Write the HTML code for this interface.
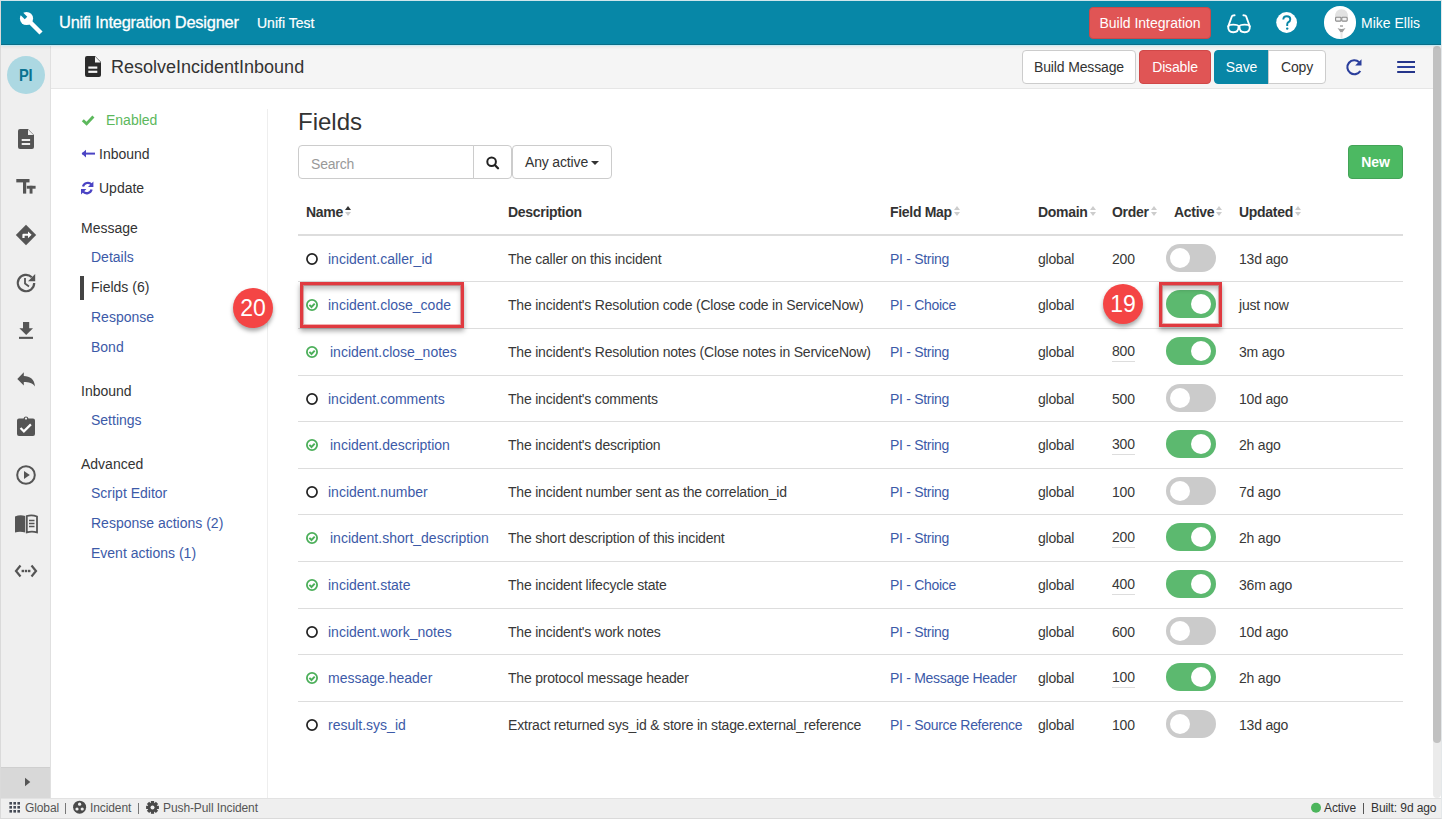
<!DOCTYPE html>
<html><head><meta charset="utf-8">
<style>
*{box-sizing:border-box;margin:0;padding:0}
html,body{width:1442px;height:819px;overflow:hidden;background:#fff;font-family:"Liberation Sans",sans-serif;color:#333}
.abs{position:absolute}
#frame{position:absolute;left:0;top:0;width:1442px;height:819px;border:1px solid #dadada;border-top-color:#cfe6ec;border-right-color:#e4e8ea;z-index:5}
#topbar{position:absolute;left:1px;top:1px;width:1440px;height:44px;background:#0787a7;border-bottom:1px solid #0a6d87;box-shadow:0 1px 0 #c9ecf5,0 2px 3px rgba(0,0,0,0.07);z-index:3}
.wt{color:#fff;white-space:nowrap}
#side{position:absolute;left:1px;top:45px;width:50px;height:753px;background:#efefef;border-right:1px solid #e0e0e0}
#pagehdr{position:absolute;left:51px;top:45px;width:1382px;height:44px;background:#f5f5f5;border-bottom:1px solid #e6e6e6}
#footer{position:absolute;left:1px;top:798px;width:1440px;height:20px;background:#efefef;border-top:1px solid #e2e2e2;font-size:12px;color:#444}
.btn{position:absolute;border:1px solid #ccc;border-radius:4px;background:#fff;font-size:14px;text-align:center;white-space:nowrap;letter-spacing:-0.15px}
.nav{position:absolute;font-size:14px;white-space:nowrap}
.lnk{color:#3c5aa8 !important}
.row{position:absolute;left:298px;width:1105px;border-bottom:1px solid #ddd}
.cell{position:absolute;font-size:14px;white-space:nowrap;top:50%;margin-top:-9px;line-height:18px;letter-spacing:-0.2px;color:#383838}
.icn{position:absolute;left:7px;top:50%;margin-top:-7px;width:14px;height:14px}
.icn svg{display:block}
.tog{position:absolute;width:50px;height:28px;border-radius:14px;background:#cbcbcb;top:8px;left:868px}
.tog::after{content:"";position:absolute;left:4px;top:4px;width:20px;height:20px;border-radius:50%;background:#fff}
.tog.on{background:#5cb96f}
.tog.on::after{left:25px}
.und{border-bottom:1px solid #ddd;line-height:17px;padding-bottom:1px}
.badge{position:absolute;width:40px;height:40px;border-radius:50%;background:#f44545;color:#fff;font-size:23px;text-align:center;line-height:40px;box-shadow:0 3px 4px rgba(0,0,0,0.35)}
.ft{position:absolute;top:2px;font-size:12px;line-height:14px;white-space:nowrap;letter-spacing:-0.1px}
.th{position:absolute;top:204px;font-size:14px;font-weight:bold;white-space:nowrap;color:#333;letter-spacing:-0.3px}
.sort{display:inline-block;width:7px;height:12px;margin-left:2px;vertical-align:-1px;position:relative}
.sort::before{content:"";position:absolute;left:0;top:0;border-left:3.5px solid transparent;border-right:3.5px solid transparent;border-bottom:4px solid #ccc}
.sort::after{content:"";position:absolute;left:0;top:6px;border-left:3.5px solid transparent;border-right:3.5px solid transparent;border-top:4px solid #ccc}
.sort.up::before{border-bottom-color:#333}
</style></head><body>
<div id="frame"></div>
<div id="topbar">
  <svg class="abs" style="left:13px;top:5px" width="34" height="34" viewBox="0 0 34 34">
    <circle cx="12.5" cy="12.5" r="6.6" fill="#fff"/><line x1="12.5" y1="12.5" x2="27" y2="27" stroke="#fff" stroke-width="4.4"/>
    <line x1="3" y1="3" x2="12" y2="12" stroke="#0787a7" stroke-width="3.6"/>
  </svg>
  <div class="abs wt" style="left:58px;top:12px;font-size:16.4px;letter-spacing:-0.2px;-webkit-text-stroke:0.3px #fff">Unifi Integration Designer</div>
  <div class="abs wt" style="left:256px;top:14px;font-size:14px;-webkit-text-stroke:0.2px #fff">Unifi Test</div>
  <div class="abs wt" style="left:1088px;top:6px;width:122px;height:32px;background:#e05555;border:1px solid #c9494a;border-radius:4px;font-size:14px;text-align:center;line-height:30px">Build Integration</div>
  <svg class="abs" style="left:1219px;top:7px" width="38" height="30" viewBox="0 0 38 30" fill="none" stroke="#fff" stroke-width="1.9" stroke-linecap="round" stroke-linejoin="round">
    <path d="M8.3,18.3 L11.9,8.2 Q12.4,7.2 14.6,7.2 M29.7,18.3 L26.1,8.2 Q25.6,7.2 23.4,7.2"/>
    <path d="M8.2,18.6 Q8.6,16.6 13.2,16.6 Q18.4,16.6 18.6,18.4 Q18.6,24.2 13.3,24.2 Q8,24.2 8.2,18.6 Z"/>
    <path d="M19.4,18.4 Q19.6,16.6 24.8,16.6 Q29.4,16.6 29.8,18.6 Q30,24.2 24.7,24.2 Q19.4,24.2 19.4,18.4 Z"/>
  </svg>
  <svg class="abs" style="left:1274.4px;top:10.4px" width="23" height="23" viewBox="0 0 23 23"><circle cx="11.6" cy="11.5" r="10.4" fill="#fff"/><path d="M8.3,8.6 Q8.3,5.2 11.8,5.2 Q15.3,5.2 15.3,8.3 Q15.3,10.3 13.1,11.4 Q12.2,12 12.2,13.6 V15" fill="none" stroke="#0886a6" stroke-width="1.9"/><circle cx="12.2" cy="17.6" r="1.2" fill="#0886a6"/></svg>
  <div class="abs" style="left:1322.5px;top:5px;width:32.5px;height:32.5px;border-radius:50%;background:#fff;overflow:hidden">
    <svg width="33" height="33" viewBox="1322 5 33 33"><path d="M1333,16 Q1333,8.5 1339.5,8.3 Q1346,8.5 1346,16 Z" fill="#e2e2e2"/><rect x="1333.6" y="16.3" width="5.4" height="3.8" rx="0.8" fill="#f2f2f2" stroke="#8a8a8a" stroke-width="1.1"/><rect x="1339.8" y="16.3" width="5.4" height="3.8" rx="0.8" fill="#f2f2f2" stroke="#8a8a8a" stroke-width="1.1"/><path d="M1338,24 h3 v2 h-3 Z" fill="#bbb"/><path d="M1335.5,27 Q1339.5,29 1343.5,27 L1340.3,31.5 h-1.6 Z" fill="#9c9c9c"/><rect x="1338.5" y="31" width="2" height="6" fill="#e6e6e6"/></svg>
  </div>
  <div class="abs wt" style="left:1360px;top:14px;font-size:14px">Mike Ellis</div>
</div>
<div id="side">
  <div class="abs" style="left:6px;top:10.6px;width:38px;height:38px;border-radius:50%;background:#acd8e2;color:#0b7391;font-size:17px;font-weight:bold;text-align:center;line-height:39px"><span style="display:inline-block;transform:scaleX(0.86);letter-spacing:-0.5px">PI</span></div>
  <svg class="abs" style="left:0;top:0" width="50" height="753" viewBox="1 45 50 753" fill="#555">
    <!-- doc -->
    <path d="M18,131 a2,2 0 0 1 2,-2 h8 l6,6 v12 a2,2 0 0 1 -2,2 h-12 a2,2 0 0 1 -2,-2 Z"/>
    <path d="M28,129.5 v5.5 h5.5 Z" fill="#efefef"/>
    <rect x="21.7" y="139" width="8.4" height="2" fill="#efefef"/><rect x="21.7" y="143" width="8.4" height="2" fill="#efefef"/>
    <!-- Tt -->
    <rect x="16.3" y="179" width="13.2" height="3.4"/><rect x="23" y="179" width="3.2" height="14.6"/>
    <rect x="26.8" y="185.8" width="8.8" height="2.9"/><rect x="29.6" y="185.8" width="2.9" height="7.8"/>
    <!-- diamond -->
    <path d="M26,224.8 L36.2,235 L26,245.2 L15.8,235 Z"/>
    <path d="M22.4,238 v-3.2 a1,1 0 0 1 1,-1 h4.6 v-2.4 l3.6,3.4 l-3.6,3.4 v-2.4 h-3.4 v2.2 Z" fill="#fff"/>
    <!-- history -->
    <path d="M34.2,283 A8.2,8.2 0 1 1 31.8,277.2" fill="none" stroke="#555" stroke-width="2.2"/>
    <path d="M35.2,274 v7.2 h-7.2 Z"/>
    <path d="M25,278 v5.6 l4,2.8" fill="none" stroke="#555" stroke-width="1.8"/>
    <!-- download -->
    <rect x="23" y="322" width="6.2" height="7"/><path d="M19.4,328.2 h13.6 l-6.8,6.8 Z"/><rect x="19" y="336.8" width="14" height="2.1"/>
    <!-- reply -->
    <path d="M17.3,379 L23.8,372.3 V376 C30,376 34.5,379.5 35,386.4 C32.5,383 29,382 23.8,382 V385.6 Z"/>
    <!-- clipboard -->
    <path d="M17,420.5 a2,2 0 0 1 2,-2 h4.5 a2.6,2.6 0 0 1 5,0 h4.5 a2,2 0 0 1 2,2 v13.5 a2,2 0 0 1 -2,2 h-14 a2,2 0 0 1 -2,-2 Z"/>
    <circle cx="26" cy="418.6" r="1.1" fill="#efefef"/>
    <path d="M20.5,428 l3.4,3.4 l7,-7" fill="none" stroke="#fff" stroke-width="2.2"/>
    <!-- play -->
    <circle cx="26" cy="475" r="8.8" fill="none" stroke="#555" stroke-width="2"/>
    <path d="M24,471 L29.8,475 L24,479 Z"/>
    <!-- book -->
    <path d="M15,516.5 Q20,514.5 25.2,516 V532.4 Q20,531 15,532.4 Z"/>
    <path d="M26.8,516 Q32,514.5 37,516.5 V532.4 Q32,531 26.8,532.4 Z" fill="none" stroke="#555" stroke-width="1.8"/>
    <path d="M29,520.5 h5.5 M29,523.5 h5.5 M29,526.5 h5.5" stroke="#555" stroke-width="1.3"/>
    <!-- code -->
    <path d="M20.5,565.5 L16,571 L20.5,576.5 M31.5,565.5 L36,571 L31.5,576.5" fill="none" stroke="#555" stroke-width="2.2"/>
    <rect x="21.6" y="569.8" width="2.4" height="2.4"/><rect x="24.8" y="569.8" width="2.4" height="2.4"/><rect x="28" y="569.8" width="2.4" height="2.4"/>
  </svg>
  <div class="abs" style="left:0;top:722px;width:49px;height:31px;background:#d8d8d8;border-top:1px solid #cfcfcf"></div>
  <svg class="abs" style="left:23px;top:732px" width="8" height="10"><path d="M1,0.7 L6.3,5 L1,9.3 Z" fill="#555"/></svg>
</div>
<div id="pagehdr">
  <svg class="abs" style="left:33px;top:11px" width="18" height="21" viewBox="0 0 18 21"><path d="M1,2 a2,2 0 0 1 2,-2 h8 l6,6 v13 a2,2 0 0 1 -2,2 h-12 a2,2 0 0 1 -2,-2 Z" fill="#2b2b2b"/><path d="M11,0.6 v5.8 h5.8 Z" fill="#f5f5f5"/><rect x="4.3" y="10.5" width="9" height="2.2" fill="#f5f5f5"/><rect x="4.3" y="14.7" width="9" height="2.2" fill="#f5f5f5"/></svg>
  <div class="abs" style="left:60px;top:12px;font-size:18px;color:#333;white-space:nowrap">ResolveIncidentInbound</div>
</div>
<div class="btn" style="left:1022px;top:50px;width:114px;height:34px;line-height:32px;color:#333">Build Message</div>
<div class="btn" style="left:1139px;top:50px;width:72px;height:34px;line-height:32px;color:#fff;background:#e05555;border-color:#d04848">Disable</div>
<div class="btn" style="left:1214px;top:50px;width:55px;height:34px;line-height:32px;color:#fff;background:#0886a6;border-color:#0886a6;border-radius:4px 0 0 4px">Save</div>
<div class="btn" style="left:1268px;top:50px;width:58px;height:34px;line-height:32px;color:#333;border-radius:0 4px 4px 0">Copy</div>

<svg class="abs" style="left:1340px;top:55px" width="80" height="25" viewBox="1340 55 80 25">
  <path d="M1360.3,71 A7,7 0 1 1 1359.2,62.2" fill="none" stroke="#2b3f9c" stroke-width="2.1"/>
  <path d="M1355.2,65.4 L1361.5,59.3 V65.4 Z" fill="#2b3f9c"/>
  <rect x="1397.2" y="61" width="17.8" height="2" fill="#25358a"/><rect x="1397.2" y="66" width="17.8" height="2" fill="#2b3f9c"/><rect x="1397.2" y="71" width="17.8" height="2" fill="#25358a"/>
</svg>
<div class="abs" style="left:1433px;top:46px;width:8px;height:752px;background:#ebebeb;border-radius:0 0 4px 4px"></div>
<div class="abs" style="left:1433px;top:46px;width:8px;height:697px;background:#c1c1c1;border-radius:4px"></div>
<!-- left nav -->
<div class="abs" style="left:267px;top:109px;width:1px;height:689px;background:#eee"></div>
<div class="nav" style="left:106px;top:112px;color:#5cb85c">Enabled</div>
<div class="nav" style="left:99px;top:146px">Inbound</div>
<div class="nav" style="left:99px;top:180px">Update</div>
<div class="nav" style="left:81px;top:220px">Message</div>
<div class="nav lnk" style="left:91px;top:249px">Details</div>
<div class="abs" style="left:80px;top:276px;width:4px;height:24px;background:#444"></div>
<svg class="abs" style="left:78px;top:108px" width="20" height="92" viewBox="78 108 20 92">
  <path d="M82.8,120.2 L86.6,123.8 L93.4,116.6" fill="none" stroke="#5cb85c" stroke-width="2.9"/>
  <path d="M82.2,153.6 H95" stroke="#4b44c4" stroke-width="2"/><path d="M81.6,153.6 L86,149.8 V157.4 Z" fill="#4b44c4"/>
  <path d="M83,186.5 A5,5 0 0 1 91.5,184.5 M91.6,189.5 A5,5 0 0 1 83,191.5" fill="none" stroke="#4b44c4" stroke-width="2.3"/>
  <path d="M93.4,181.6 V187 H88 Z M81,194.5 V189 H86.4 Z" fill="#4b44c4"/>
</svg>
<div class="nav" style="left:91px;top:279px">Fields (6)</div>
<div class="nav lnk" style="left:91px;top:309px">Response</div>
<div class="nav lnk" style="left:91px;top:339px">Bond</div>
<div class="nav" style="left:81px;top:383px">Inbound</div>
<div class="nav lnk" style="left:91px;top:412px">Settings</div>
<div class="nav" style="left:81px;top:456px">Advanced</div>
<div class="nav lnk" style="left:91px;top:485px">Script Editor</div>
<div class="nav lnk" style="left:91px;top:515px">Response actions (2)</div>
<div class="nav lnk" style="left:91px;top:545px">Event actions (1)</div>

<!-- content -->
<div class="abs" style="left:298px;top:108px;font-size:24px;color:#333">Fields</div>
<div class="abs" style="left:298px;top:145px;width:176px;height:34px;border:1px solid #ccc;border-radius:4px 0 0 4px"></div>
<div class="abs" style="left:311px;top:156px;font-size:14px;color:#999;letter-spacing:-0.2px">Search</div>
<div class="abs" style="left:473px;top:145px;width:39px;height:34px;border:1px solid #ccc;border-radius:0 4px 4px 0"></div>
<svg class="abs" style="left:485px;top:155px" width="17" height="17" viewBox="0 0 17 17"><circle cx="6.6" cy="6.8" r="4.3" fill="none" stroke="#222" stroke-width="2"/><path d="M9.8,10 L13,13.2" stroke="#222" stroke-width="2.3" stroke-linecap="round"/></svg>
<div class="btn" style="left:512px;top:145px;width:100px;height:34px;line-height:32px;color:#333">Any active<span style="display:inline-block;margin-left:3px;vertical-align:2px;border-left:4px solid transparent;border-right:4px solid transparent;border-top:4px solid #333"></span></div>
<div class="btn" style="left:1348px;top:145px;width:55px;height:34px;line-height:32px;color:#fff;background:#4cb962;border-color:#43a357;font-weight:bold">New</div>

<div class="th" style="left:306px">Name<span class="sort up"></span></div>
<div class="th" style="left:508px">Description</div>
<div class="th" style="left:890px">Field Map<span class="sort"></span></div>
<div class="th" style="left:1038px">Domain<span class="sort"></span></div>
<div class="th" style="left:1112px">Order<span class="sort"></span></div>
<div class="th" style="left:1174px">Active<span class="sort"></span></div>
<div class="th" style="left:1239px">Updated<span class="sort"></span></div>
<div class="abs" style="left:298px;top:234px;width:1105px;height:2px;background:#ddd"></div>

<div id="rows"><div class="row" style="top:236px;height:46px;"><div class="icn"><svg width="14" height="14" viewBox="0 0 14 14"><circle cx="7" cy="7" r="5.05" fill="none" stroke="#222" stroke-width="1.7"/></svg></div><div class="cell lnk" style="left:30px;letter-spacing:0">incident.caller_id</div><div class="cell" style="left:210px">The caller on this incident</div><div class="cell lnk" style="left:592px;letter-spacing:-0.3px">PI - String</div><div class="cell" style="left:740px">global</div><div class="cell" style="left:814px">200</div><div class="tog"></div><div class="cell" style="left:941px">13d ago</div></div>
<div class="row" style="top:282px;height:47px;"><div class="icn"><svg width="14" height="14" viewBox="0 0 14 14"><circle cx="7" cy="7" r="5.1" fill="none" stroke="#4caf5a" stroke-width="1.8"/><path d="M4.4,6.8 L6.5,9 L9.7,5.6" fill="none" stroke="#4caf5a" stroke-width="1.9"/></svg></div><div class="cell lnk" style="left:30px;letter-spacing:0">incident.close_code</div><div class="cell" style="left:210px">The incident's Resolution code (Close code in ServiceNow)</div><div class="cell lnk" style="left:592px;letter-spacing:-0.3px">PI - Choice</div><div class="cell" style="left:740px">global</div><div class="cell und" style="left:814px"></div><div class="tog on"></div><div class="cell" style="left:941px">just now</div></div>
<div class="row" style="top:329px;height:47px;"><div class="icn"><svg width="14" height="14" viewBox="0 0 14 14"><circle cx="7" cy="7" r="5.1" fill="none" stroke="#4caf5a" stroke-width="1.8"/><path d="M4.4,6.8 L6.5,9 L9.7,5.6" fill="none" stroke="#4caf5a" stroke-width="1.9"/></svg></div><div class="cell lnk" style="left:32px;letter-spacing:0">incident.close_notes</div><div class="cell" style="left:210px">The incident's Resolution notes (Close notes in ServiceNow)</div><div class="cell lnk" style="left:592px;letter-spacing:-0.3px">PI - String</div><div class="cell" style="left:740px">global</div><div class="cell und" style="left:814px">800</div><div class="tog on"></div><div class="cell" style="left:941px">3m ago</div></div>
<div class="row" style="top:376px;height:46px;"><div class="icn"><svg width="14" height="14" viewBox="0 0 14 14"><circle cx="7" cy="7" r="5.05" fill="none" stroke="#222" stroke-width="1.7"/></svg></div><div class="cell lnk" style="left:30px;letter-spacing:0">incident.comments</div><div class="cell" style="left:210px">The incident's comments</div><div class="cell lnk" style="left:592px;letter-spacing:-0.3px">PI - String</div><div class="cell" style="left:740px">global</div><div class="cell" style="left:814px">500</div><div class="tog"></div><div class="cell" style="left:941px">10d ago</div></div>
<div class="row" style="top:422px;height:47px;"><div class="icn"><svg width="14" height="14" viewBox="0 0 14 14"><circle cx="7" cy="7" r="5.1" fill="none" stroke="#4caf5a" stroke-width="1.8"/><path d="M4.4,6.8 L6.5,9 L9.7,5.6" fill="none" stroke="#4caf5a" stroke-width="1.9"/></svg></div><div class="cell lnk" style="left:32px;letter-spacing:0">incident.description</div><div class="cell" style="left:210px">The incident's description</div><div class="cell lnk" style="left:592px;letter-spacing:-0.3px">PI - String</div><div class="cell" style="left:740px">global</div><div class="cell und" style="left:814px">300</div><div class="tog on"></div><div class="cell" style="left:941px">2h ago</div></div>
<div class="row" style="top:469px;height:46px;"><div class="icn"><svg width="14" height="14" viewBox="0 0 14 14"><circle cx="7" cy="7" r="5.05" fill="none" stroke="#222" stroke-width="1.7"/></svg></div><div class="cell lnk" style="left:30px;letter-spacing:0">incident.number</div><div class="cell" style="left:210px">The incident number sent as the correlation_id</div><div class="cell lnk" style="left:592px;letter-spacing:-0.3px">PI - String</div><div class="cell" style="left:740px">global</div><div class="cell" style="left:814px">100</div><div class="tog"></div><div class="cell" style="left:941px">7d ago</div></div>
<div class="row" style="top:515px;height:47px;"><div class="icn"><svg width="14" height="14" viewBox="0 0 14 14"><circle cx="7" cy="7" r="5.1" fill="none" stroke="#4caf5a" stroke-width="1.8"/><path d="M4.4,6.8 L6.5,9 L9.7,5.6" fill="none" stroke="#4caf5a" stroke-width="1.9"/></svg></div><div class="cell lnk" style="left:32px;letter-spacing:0">incident.short_description</div><div class="cell" style="left:210px">The short description of this incident</div><div class="cell lnk" style="left:592px;letter-spacing:-0.3px">PI - String</div><div class="cell" style="left:740px">global</div><div class="cell und" style="left:814px">200</div><div class="tog on"></div><div class="cell" style="left:941px">2h ago</div></div>
<div class="row" style="top:562px;height:47px;"><div class="icn"><svg width="14" height="14" viewBox="0 0 14 14"><circle cx="7" cy="7" r="5.1" fill="none" stroke="#4caf5a" stroke-width="1.8"/><path d="M4.4,6.8 L6.5,9 L9.7,5.6" fill="none" stroke="#4caf5a" stroke-width="1.9"/></svg></div><div class="cell lnk" style="left:30px;letter-spacing:0">incident.state</div><div class="cell" style="left:210px">The incident lifecycle state</div><div class="cell lnk" style="left:592px;letter-spacing:-0.3px">PI - Choice</div><div class="cell" style="left:740px">global</div><div class="cell und" style="left:814px">400</div><div class="tog on"></div><div class="cell" style="left:941px">36m ago</div></div>
<div class="row" style="top:609px;height:46px;"><div class="icn"><svg width="14" height="14" viewBox="0 0 14 14"><circle cx="7" cy="7" r="5.05" fill="none" stroke="#222" stroke-width="1.7"/></svg></div><div class="cell lnk" style="left:30px;letter-spacing:0">incident.work_notes</div><div class="cell" style="left:210px">The incident's work notes</div><div class="cell lnk" style="left:592px;letter-spacing:-0.3px">PI - String</div><div class="cell" style="left:740px">global</div><div class="cell" style="left:814px">600</div><div class="tog"></div><div class="cell" style="left:941px">10d ago</div></div>
<div class="row" style="top:655px;height:47px;"><div class="icn"><svg width="14" height="14" viewBox="0 0 14 14"><circle cx="7" cy="7" r="5.1" fill="none" stroke="#4caf5a" stroke-width="1.8"/><path d="M4.4,6.8 L6.5,9 L9.7,5.6" fill="none" stroke="#4caf5a" stroke-width="1.9"/></svg></div><div class="cell lnk" style="left:30px;letter-spacing:0">message.header</div><div class="cell" style="left:210px">The protocol message header</div><div class="cell lnk" style="left:592px;letter-spacing:-0.3px">PI - Message Header</div><div class="cell" style="left:740px">global</div><div class="cell und" style="left:814px">100</div><div class="tog on"></div><div class="cell" style="left:941px">2h ago</div></div>
<div class="row" style="top:702px;height:46px;border-bottom:none;"><div class="icn"><svg width="14" height="14" viewBox="0 0 14 14"><circle cx="7" cy="7" r="5.05" fill="none" stroke="#222" stroke-width="1.7"/></svg></div><div class="cell lnk" style="left:30px;letter-spacing:0">result.sys_id</div><div class="cell" style="left:210px">Extract returned sys_id &amp; store in stage.external_reference</div><div class="cell lnk" style="left:592px;letter-spacing:-0.3px">PI - Source Reference</div><div class="cell" style="left:740px">global</div><div class="cell" style="left:814px">100</div><div class="tog"></div><div class="cell" style="left:941px">13d ago</div></div></div><!--/rows-->


<!-- annotations -->
<div class="abs" style="left:300px;top:282px;width:164px;height:46px;border:3.5px solid #e03a40;box-shadow:0 3px 5px rgba(0,0,0,0.35), inset 0 4px 5px rgba(0,0,0,0.25), inset 0 0 0 1px #f4b4b4"></div>
<div class="abs" style="left:1159px;top:282px;width:63px;height:45px;border:3.5px solid #e03a40;box-shadow:0 3px 5px rgba(0,0,0,0.35), inset 0 4px 5px rgba(0,0,0,0.25), inset 0 0 0 1px #f4b4b4"></div>
<div class="badge" style="left:233px;top:288px">20</div>
<div class="badge" style="left:1103px;top:284px">19</div>
<div id="footer">
  <svg class="abs" style="left:0;top:0" width="1440" height="20" viewBox="1 799 1440 20">
    <g fill="#454a55">
      <rect x="9.4" y="802" width="2.6" height="2.6"/><rect x="13.4" y="802" width="2.6" height="2.6"/><rect x="17.4" y="802" width="2.6" height="2.6"/>
      <rect x="9.4" y="806" width="2.6" height="2.6"/><rect x="13.4" y="806" width="2.6" height="2.6"/><rect x="17.4" y="806" width="2.6" height="2.6"/>
      <rect x="9.4" y="810" width="2.6" height="2.6"/><rect x="13.4" y="810" width="2.6" height="2.6"/><rect x="17.4" y="810" width="2.6" height="2.6"/>
    </g>
    <circle cx="79.6" cy="807.2" r="6.5" fill="#4a4a4a"/>
    <circle cx="79.6" cy="804.2" r="1.6" fill="#efefef"/><circle cx="77" cy="809" r="1.6" fill="#efefef"/><circle cx="82.2" cy="809" r="1.6" fill="#efefef"/>
    <g transform="translate(152.5,807.4)" fill="#4a4a4a">
      <circle r="4.8"/>
      <rect x="-1.6" y="-6.4" width="3.2" height="12.8"/>
      <rect x="-1.6" y="-6.4" width="3.2" height="12.8" transform="rotate(45)"/>
      <rect x="-1.6" y="-6.4" width="3.2" height="12.8" transform="rotate(90)"/>
      <rect x="-1.6" y="-6.4" width="3.2" height="12.8" transform="rotate(135)"/>
      <circle r="2" fill="#efefef"/>
    </g>
    <rect x="65" y="803" width="1" height="11" fill="#777"/>
    <rect x="138" y="803" width="1" height="11" fill="#777"/>
    <circle cx="1316" cy="807.8" r="5" fill="#4cb55c"/>
    <rect x="1363" y="803" width="1" height="11" fill="#555"/>
  </svg>
  <div class="ft" style="left:24px;color:#555">Global</div>
  <div class="ft" style="left:89px;color:#555">Incident</div>
  <div class="ft" style="left:162px;color:#555">Push-Pull Incident</div>
  <div class="ft" style="left:1323px;color:#333">Active</div>
  <div class="ft" style="left:1370px;color:#333">Built: 9d ago</div>
</div>
</body></html>
